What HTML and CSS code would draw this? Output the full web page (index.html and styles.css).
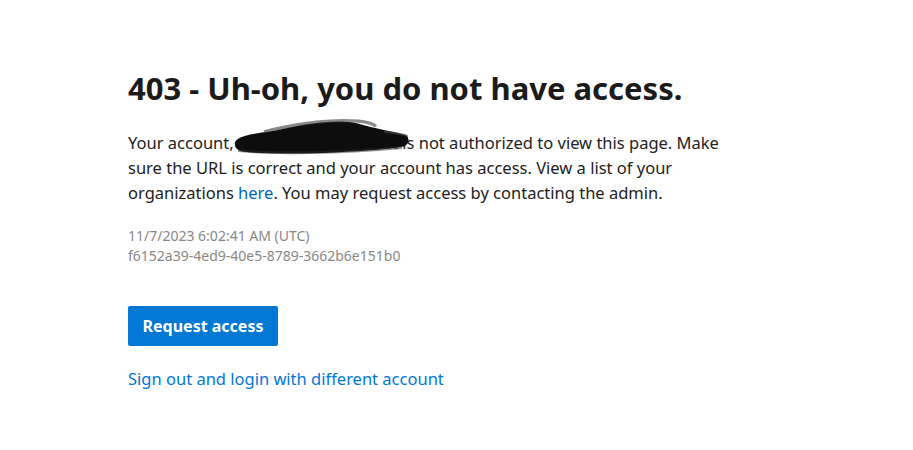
FILE: index.html
```html
<!DOCTYPE html>
<html lang="en">
<head>
  <meta charset="UTF-8" />
  <title>Access denied</title>
  <meta name="viewport" content="width=device-width, initial-scale=1.0" />
  <link rel="stylesheet" href="styles.css">
</head>
<body>
  <div class="page">
    <h1>403 - Uh-oh, you do not have access.</h1>
    <p class="message">
      Your account, <span class="redacted"><span class="hidden-name">someone@contoso.com</span><svg class="scribble" viewBox="0 0 176 34" preserveAspectRatio="none">
        <defs>
          <filter id="fuzz" x="-5%" y="-20%" width="110%" height="140%">
            <feGaussianBlur stdDeviation="0.7"/>
          </filter>
        </defs>
        <g filter="url(#fuzz)">
          <path d="M1 22 C4 15 20 14 40 11 C60 7 75 4 90 3 C105 2 118 2 130 6 C145 10 160 12 172 15 C176 18 175 24 170 26 C150 29 120 31 90 32 C60 33 30 33 10 31 C3 30 0 26 1 22 Z" fill="#111"/>
          <path d="M30 12 C60 5 95 0 125 2 C135 3 140 5 142 7" stroke="#3a3a3a" stroke-width="3" fill="none" opacity="0.6"/>
          <path d="M150 12 C160 13 168 14 174 16" stroke="#555" stroke-width="2" fill="none" opacity="0.5"/>
          <path d="M4 30 C40 33 100 33 168 27" stroke="#2a2a2a" stroke-width="2.5" fill="none" opacity="0.5"/>
        </g>
      </svg></span> is not authorized to view this page. Make sure the URL is correct and your account has access. View a list of your organizations <a href="#">here</a>. You may request access by contacting the admin.
    </p>
    <div class="meta">
      <div>11/7/2023 6:02:41 AM (UTC)</div>
      <div>f6152a39-4ed9-40e5-8789-3662b6e151b0</div>
    </div>
    <button type="button">Request access</button>
    <a class="signout" href="#">Sign out and login with different account</a>
  </div>
</body>
</html>
```

FILE: styles.css
```css
body {
  margin: 0;
  background: #fff;
  font-family: 'Noto Sans', 'Segoe UI', sans-serif;
  color: #222;
}

.page {
  padding: 62px 128px 0;
  width: 600px;
}

h1 {
  margin: 0 0 16px;
  font-size: 31px;
  font-weight: 700;
  line-height: 52px;
  color: #1b1b1b;
}

.message {
  margin: 0;
  font-size: 16.5px;
  line-height: 25px;
  width: 600px;
}

.message a {
  color: #0067b8;
  text-decoration: none;
}

.redacted {
  position: relative;
  display: inline-block;
  width: 160px;
  vertical-align: top;
}

.hidden-name {
  display: block;
  overflow: hidden;
  white-space: nowrap;
  color: #555;
}

.scribble {
  position: absolute;
  left: -4px;
  top: -11px;
  width: 176px;
  height: 36px;
}

.meta {
  margin-top: 21px;
  font-size: 14px;
  line-height: 20px;
  color: #8a8886;
}

button {
  display: block;
  margin-top: 40px;
  width: 150px;
  height: 40px;
  padding: 0;
  background-color: #0078d4;
  color: white;
  border: none;
  border-radius: 2px;
  font-family: inherit;
  font-size: 16px;
  font-weight: 700;
  cursor: pointer;
}

.signout {
  display: inline-block;
  margin-top: 20px;
  font-size: 16.5px;
  line-height: 25px;
  color: #0078d4;
  text-decoration: none;
}
```
